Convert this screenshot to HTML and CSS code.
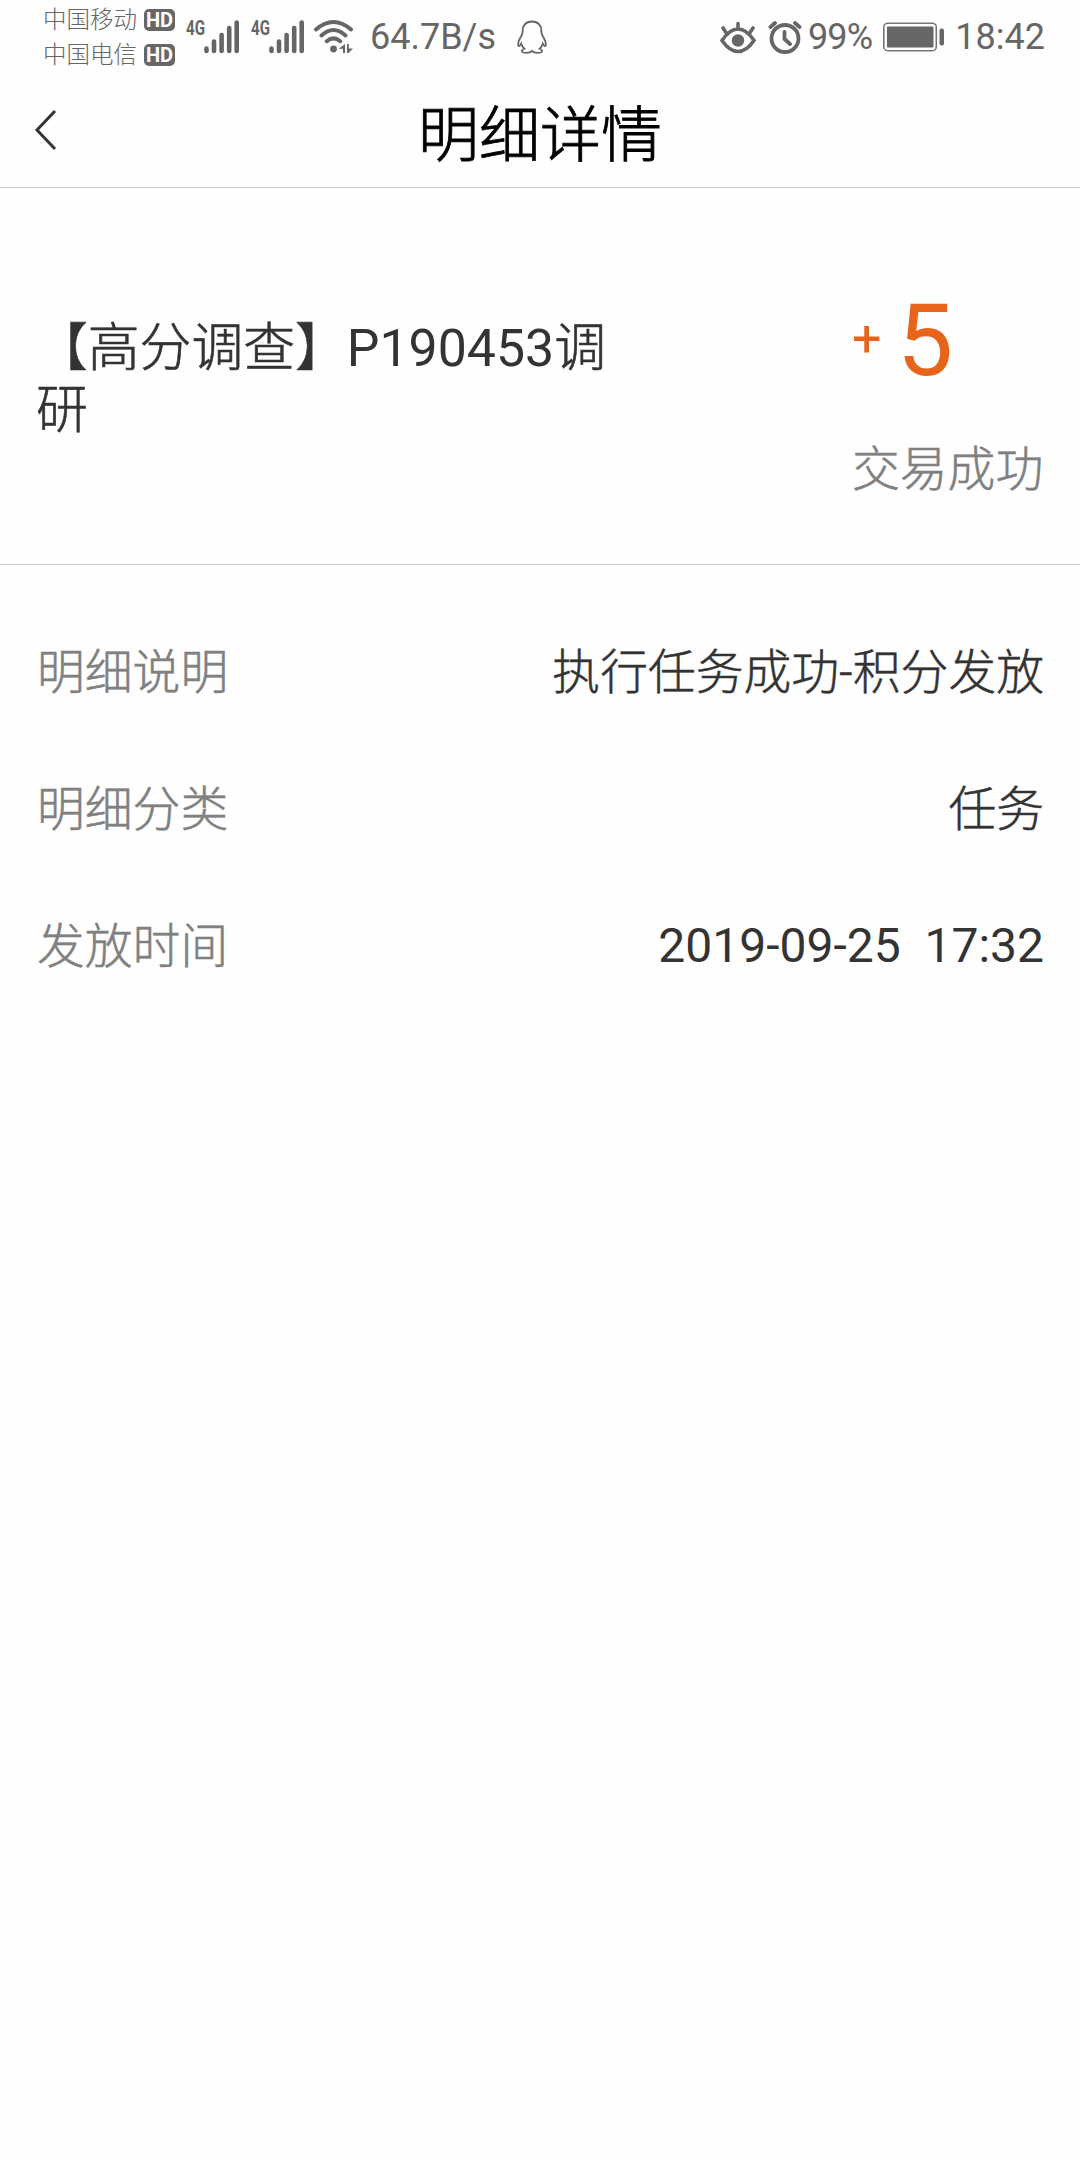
FILE: index.html
```html
<!DOCTYPE html>
<html lang="zh-CN">
<head>
    <meta charset="UTF-8">
    <meta name="viewport" content="width=device-width, initial-scale=1.0">
    <title>明细详情</title>
    <link rel="stylesheet" href="styles.css">
</head>
<body>
    <div class="status-bar">
        <div class="carriers">
            <div class="carrier">中国移动<span class="hd">HD</span></div>
            <div class="carrier">中国电信<span class="hd">HD</span></div>
        </div>
        <svg class="signal" width="54" height="36" viewBox="0 0 54 36">
            <text x="0" y="16" textLength="19" lengthAdjust="spacingAndGlyphs">4G</text>
            <path d="M20.5 29.5v2.4M28 22.5v9.4M35.6 16v15.9M43.2 9v22.9M50.7 3.5v28.4"/>
        </svg>
        <svg class="signal" width="54" height="36" viewBox="0 0 54 36">
            <text x="0" y="16" textLength="19" lengthAdjust="spacingAndGlyphs">4G</text>
            <path d="M20.5 29.5v2.4M28 22.5v9.4M35.6 16v15.9M43.2 9v22.9M50.7 3.5v28.4"/>
        </svg>
        <svg class="wifi" width="40" height="36" viewBox="0 0 40 36">
            <path class="line" d="M2 10.5Q19.5-4.500 37 10.500M7.500 16.500Q19.500 5.500 31.500 16.500M12.800 22.200Q19.500 16.500 26.200 22.200"/>
            <circle cx="19.500" cy="30" r="3.400"/>
            <path d="M31 25v9h-2v-4.200h-4.200zM33 25h1.800v4.500h4.200L34.500 34H33z"/>
        </svg>
        <span class="speed">64.7B/s</span>
        <svg class="qq" width="30" height="34" viewBox="0 0 30 34">
            <path d="M15 1.500C8.500 1.500 5.400 6 5.600 11.500C5.700 13.500 4.800 14.500 4.400 16C2.300 19 .8 22.500 1.300 25.500C1.600 27 3.200 25.500 4.200 23.600C4.800 26 6 27.500 7.400 28.700C4.500 29.500 3.700 32.500 7.500 32.700C11 33 13.500 32.500 15 31C16.500 32.500 19 33 22.500 32.700C26.300 32.500 25.500 29.500 22.600 28.700C24 27.500 25.200 26 25.800 23.600C26.800 25.500 28.400 27 28.700 25.500C29.200 22.500 27.700 19 25.600 16C25.200 14.500 24.300 13.500 24.400 11.500C24.600 6 21.500 1.500 15 1.500Z"/>
        </svg>
        <div class="status-right">
            <svg class="eye" width="36" height="34" viewBox="0 0 36 34">
                <path class="line" d="M2 20.500Q9.500 9 18 9T34 20.500Q26.500 31.500 18 31.500T2 20.500ZM18 9V3.500M7 14L3 8M29 14l4-6"/>
                <circle cx="18" cy="20.500" r="6.200"/>
            </svg>
            <svg class="alarm" width="34" height="34" viewBox="0 0 34 34">
                <circle cx="17" cy="18.500" r="13.500"/>
                <path d="M16.500 12v7l5.500 5M2.500 7L7 3M31.500 7L27 3"/>
            </svg>
            <span class="percent">99%</span>
            <svg class="battery" width="62" height="30" viewBox="0 0 62 30">
                <rect class="shell" x=".8" y="1.200" width="52.500" height="27.500" rx="4"/>
                <rect x="4" y="4.500" width="46.500" height="21" rx="1"/>
                <rect x="56.500" y="6.500" width="4.500" height="17" rx="2"/>
            </svg>
            <span class="clock">18:42</span>
        </div>
    </div>

    <header class="nav">
        <svg class="back" width="24" height="42" viewBox="0 0 24 42">
            <path d="M21 2L3 21L21 40"/>
        </svg>
        <h1>明细详情</h1>
    </header>

    <section class="summary">
        <div class="task-name">【高分调查】<span class="code">P190453</span>调研</div>
        <div class="result">
            <div class="points"><span class="plus">+</span><span class="number">5</span></div>
            <div class="state">交易成功</div>
        </div>
    </section>

    <section class="details">
        <div class="row">
            <span class="label">明细说明</span>
            <span class="value">执行任务成功-积分发放</span>
        </div>
        <div class="row">
            <span class="label">明细分类</span>
            <span class="value">任务</span>
        </div>
        <div class="row">
            <span class="label">发放时间</span>
            <span class="value time">2019-09-25&nbsp; 17:32</span>
        </div>
    </section>
</body>
</html>
```

FILE: styles.css
```css
* { box-sizing: border-box; }
body {
    margin: 0;
    min-height: 2160px;
    background: #fefefe;
    color: #333;
    font-family: Roboto, "Noto Sans CJK SC", sans-serif;
    font-weight: 300;
}
svg { display: block; flex: none; }

/* status bar */
.status-bar {
    display: flex;
    align-items: center;
    height: 74px;
    padding: 0 35px 0 43px;
    color: #666;
    fill: #666;
    font-size: 36px;
    font-weight: 400;
    line-height: 76px;
    white-space: nowrap;
}
.carriers { width: 143px; padding-top: 2px; }
.carrier {
    display: flex;
    align-items: center;
    height: 35px;
    font-size: 23.5px;
    font-weight: 300;
    line-height: 35px;
}
.hd {
    width: 31px;
    height: 22px;
    margin: 0 0 1px 7px;
    border-radius: 5px;
    background: #666;
    color: #fefefe;
    font-size: 20px;
    font-weight: 700;
    line-height: 23px;
    text-align: center;
}
.signal { margin-right: 11px; overflow: visible; }
.signal text { font-size: 21px; font-weight: 700; }
.signal path { stroke: #666; stroke-width: 4.6; stroke-linecap: round; }
.wifi { margin-left: -2px; }
.wifi .line { fill: none; stroke: #666; stroke-width: 4; stroke-linecap: round; }
.speed { margin-left: 16px; }
.qq { margin-left: 21px; fill: none; stroke: #666; stroke-width: 1.8; }
.status-right {
    display: flex;
    align-items: center;
    margin-left: auto;
}
.eye .line { fill: none; stroke: #666; stroke-width: 3.6; stroke-linecap: round; }
.alarm {
    margin-left: 12px;
    fill: none;
    stroke: #666;
    stroke-width: 3.8;
    stroke-linecap: round;
    stroke-linejoin: round;
}
.percent { margin-left: 6px; letter-spacing: -0.8px; }
.battery { margin-left: 11px; }
.battery .shell { fill: none; stroke: #777; stroke-width: 1.6; }
.clock { margin-left: 10px; }

/* title bar */
.nav {
    display: grid;
    grid-template-columns: 80px 1fr 80px;
    align-items: center;
    height: 114px;
    border-bottom: 1px solid #ccc;
}
.back {
    margin: 0 0 2px 34px;
    fill: none;
    stroke: #333;
    stroke-width: 3;
}
.nav h1 {
    margin: 0;
    padding-top: 10px;
    color: #000;
    font-size: 61px;
    font-weight: 300;
    line-height: 90px;
    text-align: center;
    -webkit-text-stroke: 0.8px;
}

/* task and points */
.summary {
    display: flex;
    justify-content: space-between;
    height: 377px;
    padding: 130px 37px 0 36px;
    border-bottom: 1px solid #ccc;
}
.task-name {
    width: 580px;
    font-size: 51.8px;
    line-height: 62px;
    word-break: break-all;
    -webkit-text-stroke: 0.6px;
}
.code { font-weight: 400; -webkit-text-stroke: 0; }
.result { flex: none; width: 191px; }
.points {
    display: flex;
    align-items: baseline;
    height: 110px;
    margin-top: -35px;
    color: #e8641b;
    font-weight: 400;
    line-height: 116px;
}
.plus {
    width: 45px;
    align-self: flex-start;
    font-size: 52px;
    line-height: 111px;
}
.number { font-size: 100px; }
.state {
    margin-top: 42px;
    color: #808080;
    font-size: 47.8px;
    line-height: 70px;
    white-space: nowrap;
    -webkit-text-stroke: 0.5px;
}

/* detail rows */
.details { padding: 40px 36px 0 37px; }
.row {
    display: flex;
    justify-content: space-between;
    align-items: center;
    height: 136.7px;
    font-size: 47.8px;
    line-height: 70px;
    -webkit-text-stroke: 0.5px;
}
.label { color: #808080; }
.time {
    padding-bottom: 1px;
    font-size: 48px;
    font-weight: 400;
    -webkit-text-stroke: 0;
}
```
